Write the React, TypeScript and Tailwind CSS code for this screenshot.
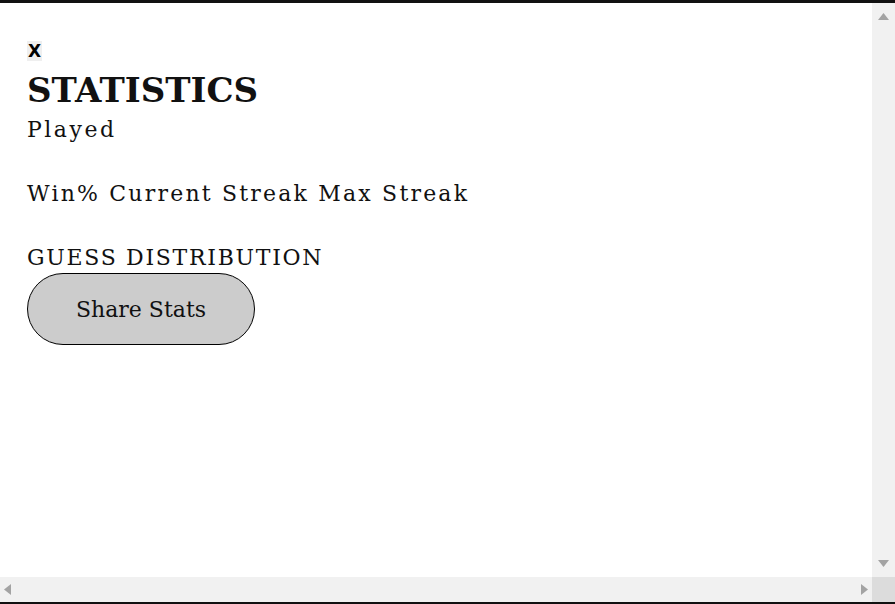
import React from 'react';

const slab = { fontFamily: '"DejaVu Serif", serif' };

function VScrollbar() {
    return (
        <div className="w-[23px] h-full bg-[#f1f1f1] flex flex-col items-center justify-between py-[10px]">
            <svg width="11" height="7" viewBox="0 0 11 7"><path d="M5.5 0L11 7H0z" fill="#a3a3a3" /></svg>
            <svg width="11" height="7" viewBox="0 0 11 7"><path d="M0 0h11L5.5 7z" fill="#a3a3a3" /></svg>
        </div>
    );
}

function HScrollbar() {
    return (
        <div className="flex h-[25px]">
            <div className="flex-1 bg-[#f1f1f1] flex items-center justify-between px-[4px]">
                <svg width="7" height="11" viewBox="0 0 7 11"><path d="M7 0v11L0 5.5z" fill="#a3a3a3" /></svg>
                <svg width="7" height="11" viewBox="0 0 7 11"><path d="M0 0l7 5.5L0 11z" fill="#a3a3a3" /></svg>
            </div>
            <div className="w-[23px] bg-[#dcdcdc]" />
        </div>
    );
}

export default function App() {
    return (
        <div className="w-[895px] h-[604px] bg-[#111] flex flex-col overflow-hidden">
            <div className="h-[3px] shrink-0" />
            <div className="flex h-[574px] shrink-0 bg-white">
                <div className="flex-1 px-[27px] pt-[37px] text-[#111]" style={slab}>
                    <button
                        className="bg-[#efefef] text-[17px] font-bold leading-[20px] px-[1px] text-black"
                        style={{ fontFamily: '"DejaVu Sans", sans-serif' }}
                    >
                        X
                    </button>
                    <h2 className="text-[34px] font-bold tracking-[0px] leading-[40px] mt-[6px]">STATISTICS</h2>
                    <div className="text-[22px] tracking-[2.5px] leading-[28px] mt-[6px]">Played</div>
                    <div className="text-[22px] tracking-[2.2px] leading-[28px] mt-[36px]">
                        Win% Current Streak Max Streak
                    </div>
                    <div className="text-[22px] tracking-[1.7px] leading-[28px] mt-[36px]">GUESS DISTRIBUTION</div>
                    <button className="mt-[1px] w-[228px] h-[72px] rounded-full bg-[#cccccc] border border-black text-[22px] text-[#111]">
                        Share Stats
                    </button>
                </div>
                <VScrollbar />
            </div>
            <HScrollbar />
        </div>
    );
}
